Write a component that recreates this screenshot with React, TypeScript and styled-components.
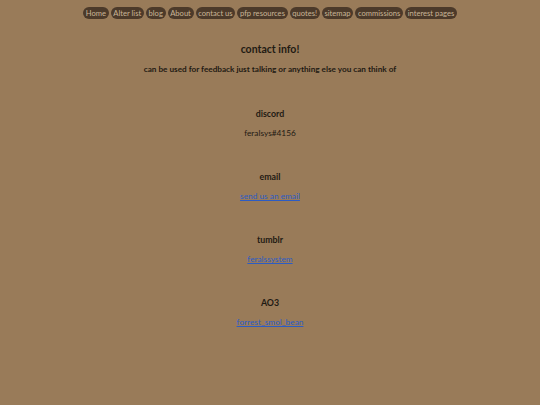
import React from 'react';
import styled, { createGlobalStyle } from 'styled-components';

const links = [
  'Home',
  'Alter list',
  'blog',
  'About',
  'contact us',
  'pfp resources',
  'quotes!',
  'sitemap',
  'commissions',
  'interest pages',
];

type Contact = { label: string; value: string; link?: boolean };

const contacts: Contact[] = [
  { label: 'discord', value: 'feralsys#4156' },
  { label: 'email', value: 'send us an email', link: true },
  { label: 'tumblr', value: 'feralssystem', link: true },
  { label: 'AO3', value: 'forrest_smol_bean', link: true },
];

function App() {
  return (
    <>
      <GlobalStyle />
      <Page>
        <Nav>
          {links.map((l) => (
            <Pill key={l} href='#'>
              {l}
            </Pill>
          ))}
        </Nav>

        <Title>contact info!</Title>
        <Sub>can be used for feedback just talking or anything else you can think of</Sub>

        <List>
          {contacts.map((c) => (
            <Section key={c.label}>
              <Label>{c.label}</Label>
              {c.link ? <Link href='#'>{c.value}</Link> : <Value>{c.value}</Value>}
            </Section>
          ))}
        </List>
      </Page>
    </>
  );
}

export default App;

const GlobalStyle = createGlobalStyle`
  html, body {
    margin: 0;
    padding: 0;
    background: #997b59;
  }
  body {
    font-family: 'Lato', 'Noto Sans', sans-serif;
    color: #1f1a13;
  }
`;

const Page = styled.div`
  display: flex;
  flex-direction: column;
  align-items: center;
  min-height: 405px;
  padding-top: 7px;
  box-sizing: border-box;
`;

const Nav = styled.nav`
  display: flex;
  gap: 2px;
`;

const Pill = styled.a`
  display: block;
  height: 12px;
  line-height: 12px;
  padding: 0 2.7px;
  border-radius: 6px;
  background: #4c3a2a;
  color: #c9b597;
  font-size: 7.6px;
  text-decoration: none;
  white-space: nowrap;
`;

const Title = styled.h1`
  margin: 23px 0 0;
  font-size: 10.5px;
  font-weight: 700;
  line-height: 14px;
`;

const Sub = styled.p`
  margin: 7px 0 0;
  font-size: 8.2px;
  font-weight: 700;
  line-height: 12px;
`;

const List = styled.div`
  display: flex;
  flex-direction: column;
  align-items: center;
  gap: 32px;
  margin-top: 33px;
`;

const Section = styled.div`
  display: flex;
  flex-direction: column;
  align-items: center;
  gap: 7px;
`;

const Label = styled.h2`
  margin: 0;
  font-size: 8.8px;
  font-weight: 700;
  line-height: 12px;
`;

const Value = styled.span`
  font-size: 8.3px;
  line-height: 12px;
`;

const Link = styled.a`
  font-size: 8.3px;
  line-height: 12px;
  color: #2c5cc4;
  text-decoration: underline;
`;
